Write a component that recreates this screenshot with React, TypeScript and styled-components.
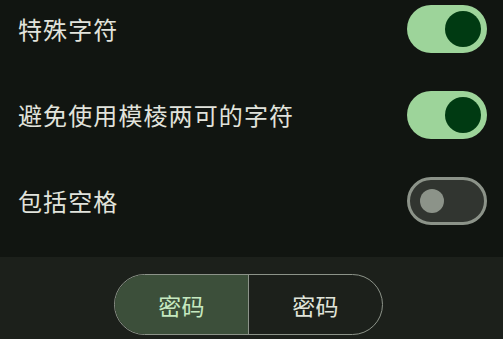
import styled, { createGlobalStyle } from 'styled-components';

const GlobalStyle = createGlobalStyle`
  html, body {
    margin: 0;
    padding: 0;
    background: #111511;
  }
  body {
    font-family: "Noto Sans CJK SC", "Noto Sans", sans-serif;
  }
`;

const options = [
  { label: '特殊字符', on: true },
  { label: '避免使用模棱两可的字符', on: true },
  { label: '包括空格', on: false },
];

function App() {
  return (
    <>
      <GlobalStyle />
      <Page>
        <List>
          {options.map((o) => (
            <Row key={o.label}>
              <Label>{o.label}</Label>
              <Switch $on={o.on}>
                <Thumb $on={o.on} />
              </Switch>
            </Row>
          ))}
        </List>
        <BottomBar>
          <Segmented>
            <Segment $selected>密码</Segment>
            <Segment>密码</Segment>
          </Segmented>
        </BottomBar>
      </Page>
    </>
  );
}

export default App;

const Page = styled.div`
  width: 503px;
  height: 339px;
  display: flex;
  flex-direction: column;
  background: #111511;
  overflow: hidden;
`;

const List = styled.div`
  display: flex;
  flex-direction: column;
  gap: 38px;
  padding: 5px 16px 0 18px;
  height: 257px;
  flex-shrink: 0;
  box-sizing: border-box;
`;

const Row = styled.div`
  display: flex;
  align-items: center;
  justify-content: space-between;
  height: 48px;
`;

const Label = styled.span`
  color: #e1e3dc;
  font-size: 24px;
  letter-spacing: 1.1px;
  line-height: 1;
`;

const Switch = styled.div<{ $on?: boolean }>`
  width: 80px;
  height: 48px;
  box-sizing: border-box;
  border-radius: 24px;
  display: flex;
  align-items: center;
  justify-content: ${(p) => (p.$on ? 'flex-end' : 'flex-start')};
  padding: ${(p) => (p.$on ? '0 6px' : '0 10px')};
  background: ${(p) => (p.$on ? '#9dd49a' : '#313530')};
  border: ${(p) => (p.$on ? 'none' : '3px solid #8c9389')};
`;

const Thumb = styled.div<{ $on?: boolean }>`
  width: ${(p) => (p.$on ? '36px' : '24px')};
  height: ${(p) => (p.$on ? '36px' : '24px')};
  border-radius: 50%;
  background: ${(p) => (p.$on ? '#003a12' : '#8c9389')};
`;

const BottomBar = styled.div`
  flex: 1;
  background: #1c201b;
  display: flex;
  justify-content: center;
  padding: 17px 6px 0 0;
`;

const Segmented = styled.div`
  display: flex;
  width: 269px;
  height: 61px;
  box-sizing: border-box;
  border: 1.5px solid #8c9389;
  border-radius: 31px;
  overflow: hidden;
`;

const Segment = styled.div<{ $selected?: boolean }>`
  flex: 1;
  display: flex;
  align-items: center;
  justify-content: center;
  font-size: 23px;
  letter-spacing: 0.3px;
  color: ${(p) => (p.$selected ? '#c6e9c0' : '#e0e4da')};
  background: ${(p) => (p.$selected ? '#3c4f3a' : 'transparent')};
  & + & {
    border-left: 1.5px solid #8c9389;
  }
`;
